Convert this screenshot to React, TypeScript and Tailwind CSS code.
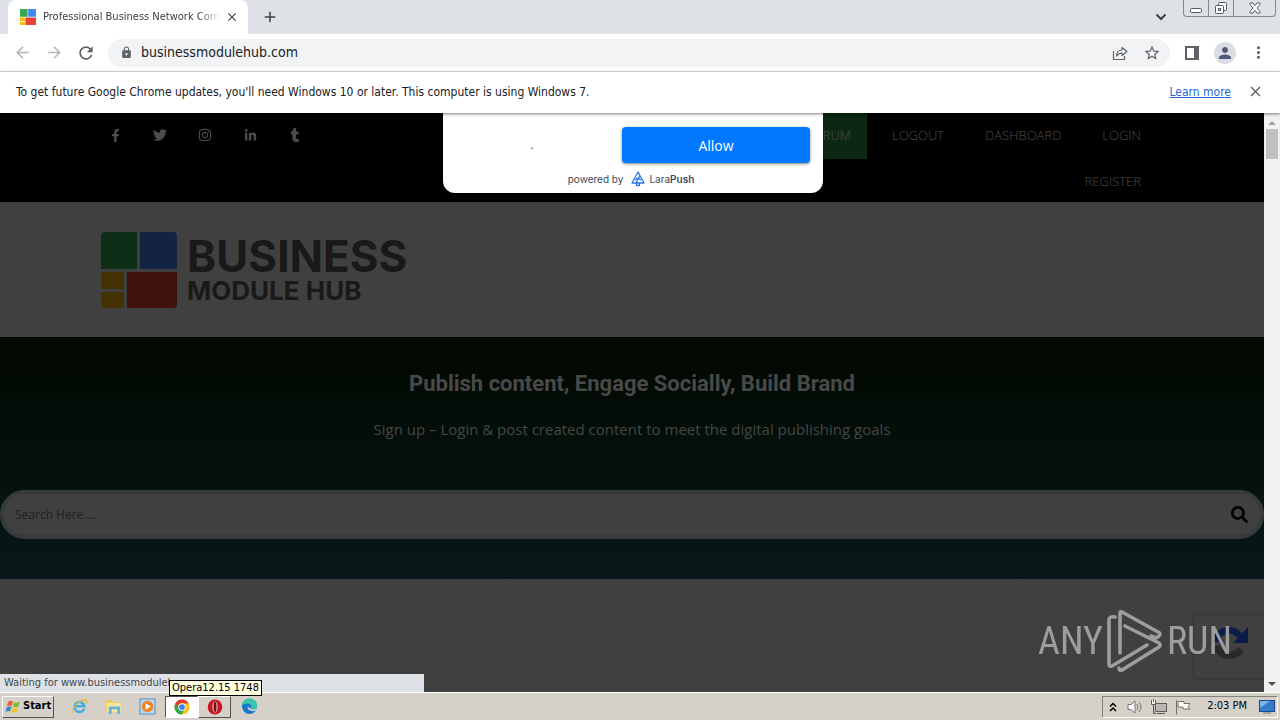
import React from "react";
import { FaFacebookF, FaTwitter, FaInstagram, FaLinkedinIn, FaTumblr, FaSearch } from "react-icons/fa";
import { MdArrowBack, MdArrowForward, MdRefresh, MdLock, MdStarBorder, MdPerson, MdMoreVert, MdClose, MdAdd } from "react-icons/md";

const uiFont = "font-['DejaVu_Sans_Condensed','Noto_Sans',sans-serif]";

function BrandMark({ className }: { className: string }) {
  return (
    <svg viewBox="0 0 76 76" className={className} aria-hidden="true">
      <path d="M4 0H36V37H0V4Q0 0 4 0Z" fill="#34a853" />
      <path d="M39 0H72Q76 0 76 4V37H39Z" fill="#4285f4" />
      <path d="M0 40H23V57H0Z" fill="#fbbc05" />
      <path d="M0 60H23V76H4Q0 76 0 72Z" fill="#fbbc05" />
      <path d="M26 40H76V72Q76 76 72 76H26Z" fill="#ea4335" />
    </svg>
  );
}

function TabStrip() {
  return (
    <div className="flex h-[34px] shrink-0 items-end bg-[#dee1e6]">
      <div className="ml-2 flex h-[34px] w-60 items-center rounded-t-lg bg-white pr-2 pl-3">
        <BrandMark className="h-4 w-4 shrink-0" />
        <span className="ml-[7px] flex-1 overflow-hidden text-[11px] whitespace-nowrap text-[#3c4043] [mask-image:linear-gradient(to_right,black_88%,transparent)]">
          Professional Business Network Comm
        </span>
        <button aria-label="Close tab" className="ml-1 flex h-4 w-4 items-center justify-center text-[#3c4043]">
          <MdClose size={14} />
        </button>
      </div>
      <button aria-label="New tab" className="ml-3 flex h-[34px] w-5 items-center justify-center text-[#3c4043]">
        <MdAdd size={18} />
      </button>
      <div className="flex-1" />
      <button aria-label="Search tabs" className="mr-3.5 flex h-[34px] w-4 items-center justify-center">
        <svg viewBox="0 0 12 8" className="h-2 w-3" fill="none" stroke="#3c4043" strokeWidth="2"><path d="M1.500 1.500L6 6L10.500 1.500" /></svg>
      </button>
      <div className="mr-1 flex h-[17px] self-start rounded-b border border-t-0 border-[#85888e]">
        <button aria-label="Minimize" className="flex w-[25px] items-center justify-center border-r border-[#85888e]">
          <svg viewBox="0 0 12 12" className="h-3 w-3" fill="white" stroke="#555960"><rect x=".5" y="6.500" width="11" height="4" rx="1" /></svg>
        </button>
        <button aria-label="Restore" className="flex w-[25px] items-center justify-center border-r border-[#85888e]">
          <svg viewBox="0 0 12 12" className="h-3 w-3" fill="white" stroke="#555960"><rect x="3.500" y=".5" width="8" height="8" rx="1" /><rect x=".5" y="3.500" width="8" height="8" rx="1" /><rect x="3.500" y="6.500" width="2" height="2" /></svg>
        </button>
        <button aria-label="Close window" className="flex w-[41px] items-center justify-center">
          <svg viewBox="0 0 12 12" className="h-3 w-3" fill="white" stroke="#555960"><path d="M1 1H4L6 3.500L8 1H11V2.500L8 6L11 9.500V11H8L6 8.500L4 11H1V9.500L4 6L1 2.500Z" /></svg>
        </button>
      </div>
    </div>
  );
}

function Toolbar() {
  return (
    <div className="flex h-[38px] shrink-0 items-center border-b border-[#dadce0] bg-white pr-3 pl-3 text-[#5f6368]">
      <button aria-label="Back" className="flex w-5 justify-center text-[#b5b7ba]"><MdArrowBack size={19} /></button>
      <button aria-label="Forward" className="ml-3 flex w-5 justify-center text-[#b5b7ba]"><MdArrowForward size={19} /></button>
      <button aria-label="Reload" className="ml-3 flex w-5 justify-center"><MdRefresh size={20} /></button>
      <div className="ml-3 flex h-7 flex-1 items-center rounded-full bg-[#f1f3f4] pr-2.5 pl-3">
        <MdLock size={13} />
        <input aria-label="Address" defaultValue="businessmodulehub.com" className="ml-2 min-w-0 flex-1 bg-transparent text-[14px] text-[#202124] outline-none" />
        <button aria-label="Share" className="flex w-4 justify-center">
          <svg viewBox="0 0 16 16" className="h-4 w-4" fill="none" stroke="currentColor" strokeWidth="1.2"><path d="M1.500 6V14.500H12.500V11" /><path d="M4.500 11C4.500 7 7 5 10 5V2.500L15 6.500L10 10.500V8C7.500 8 6 9 4.500 11Z" strokeLinejoin="round" /></svg>
        </button>
        <button aria-label="Bookmark" className="ml-4 flex w-4 justify-center"><MdStarBorder size={18} className="shrink-0" /></button>
      </div>
      <button aria-label="Side panel" className="ml-3.5 flex w-4 justify-center">
        <svg viewBox="0 0 14 14" className="h-3.5 w-3.5"><path d="M0 0H14V14H0ZM2 2V12H9V2Z" fill="currentColor" fillRule="evenodd" /></svg>
      </button>
      <button aria-label="Profile" className="ml-3.5 flex h-[22px] w-[22px] items-center justify-center rounded-full bg-[#dadde3] text-[#50597a]"><MdPerson size={18} /></button>
      <button aria-label="Menu" className="ml-3 flex w-5 justify-center"><MdMoreVert size={19} /></button>
    </div>
  );
}

function UpdateNotice() {
  return (
    <div className="z-10 flex h-[41px] shrink-0 items-center bg-white pr-4 pb-0.5 pl-4 text-[12px] text-[#202124] shadow-[0_1px_3px_rgba(0,0,0,0.5)]">
      <p className="flex-1">To get future Google Chrome updates, you'll need Windows 10 or later. This computer is using Windows 7.</p>
      <a href="#learn" className="text-[#2468d0] underline">Learn more</a>
      <button aria-label="Dismiss" className="ml-4 text-[#5f6368]"><MdClose size={17} /></button>
    </div>
  );
}

function SiteNav() {
  const item = "flex h-[46px] items-center px-4";
  return (
    <header className="flex h-[89px] shrink-0 justify-between bg-black pr-[107px] pl-[105px] text-[#4c4c4c]">
      <ul className="flex h-11 items-center gap-[25px]">
        <li><a href="#f" aria-label="Facebook" className="flex w-5 justify-center"><FaFacebookF size={13} /></a></li>
        <li><a href="#t" aria-label="Twitter" className="flex w-5 justify-center"><FaTwitter size={14} /></a></li>
        <li><a href="#i" aria-label="Instagram" className="flex w-5 justify-center"><FaInstagram size={14} /></a></li>
        <li><a href="#l" aria-label="LinkedIn" className="flex w-5 justify-center"><FaLinkedinIn size={13} /></a></li>
        <li><a href="#u" aria-label="Tumblr" className="flex w-5 justify-center"><FaTumblr size={14} /></a></li>
      </ul>
      <nav className="flex w-[400px] flex-wrap justify-end gap-x-[9px] font-['Open_Sans',sans-serif] text-[13px] font-light">
        <a href="#forum" className={item + " bg-[#0c2814]"}>FORUM</a>
        <a href="#logout" className={item}>LOGOUT</a>
        <a href="#dashboard" className={item}>DASHBOARD</a>
        <a href="#login" className={item}>LOGIN</a>
        <a href="#register" className={item}>REGISTER</a>
      </nav>
    </header>
  );
}

function PushPrompt() {
  return (
    <div className="absolute top-0 left-[443px] h-20 w-[380px] rounded-b-xl bg-white">
      <div className="flex items-center justify-between pt-3.5 pr-[13px]">
        <button className="h-9 w-[178px] font-['Open_Sans',sans-serif] text-[12px] text-[#505050]">.</button>
        <button className="h-9 w-[188px] shrink-0 rounded bg-[#0078ff] font-['Open_Sans',sans-serif] text-[14px] text-white shadow-[0_1px_3px_rgba(0,0,0,0.5)]">Allow</button>
      </div>
      <div className="mt-2 flex items-center justify-center pr-1 font-['Inter',sans-serif] text-[10px] text-[#404858]">
        <span>powered by</span>
        <svg viewBox="0 0 14 16" className="mr-1 ml-2 h-4 w-3.5" fill="none" stroke="#2878e8" strokeWidth="1.3" strokeLinejoin="round"><path d="M7 1L1 12H13L7 1M9 4.500L5 12M4 9L7 7L10 9M5.500 12V14.500H8.500V12" /></svg>
        <span>Lara<b className="font-semibold">Push</b></span>
      </div>
    </div>
  );
}

function Watermark() {
  const word = "font-['Liberation_Sans_Narrow','Roboto_Condensed','Open_Sans_Condensed','Roboto',sans-serif] text-[38px] leading-[62px]";
  return (
    <div className="absolute right-8 bottom-5 flex items-center text-[#a8a8a8] opacity-90">
      <span className={word}>ANY</span>
      <svg viewBox="0 0 56 62" className="mx-1 h-[62px] w-14" fill="none" stroke="currentColor" strokeWidth="3.600" strokeLinejoin="round" strokeLinecap="round">
        <path d="M13 43V3Q13 1 15 2L52 22.500Q54 24 52 26L49 28L44 26" />
        <path d="M8 7Q2 6 2 10V54Q2 57 5 56L40 35" />
        <path d="M18 16L52 33Q54 35 52 37L15 60Q12 61 12 58" />
      </svg>
      <span className={word}>RUN</span>
    </div>
  );
}

function WebPage() {
  return (
    <div className="relative flex min-w-0 flex-1 flex-col overflow-hidden bg-[#404040]">
      <SiteNav />
      <div className="flex h-[135px] shrink-0 items-center pl-[101px]">
        <BrandMark className="h-[76px] w-[76px] brightness-[0.27]" />
        <div className="ml-2.5 font-['Inter',sans-serif] font-bold text-[#191919]">
          <div className="text-[44px] leading-[42px]">BUSINESS</div>
          <div className="text-[26px] leading-7">MODULE HUB</div>
        </div>
      </div>
      <section className="flex h-[242px] shrink-0 flex-col items-center bg-linear-to-b from-[#020802] to-[#0a171a] pt-8">
        <h1 className="font-['Roboto',sans-serif] text-[22px] leading-[30px] font-bold text-[#494949]">Publish content, Engage Socially, Build Brand</h1>
        <p className="mt-[18px] font-['Open_Sans',sans-serif] text-[15px] leading-6 text-[#434845]">Sign up – Login &amp; post created content to meet the digital publishing goals</p>
        <form className="mt-[49px] flex h-[49px] w-full items-center rounded-full border-4 border-[#353b3b] bg-[#404040] pr-3 pl-[11px]">
          <input aria-label="Search" placeholder="Search Here...." className="min-w-0 flex-1 bg-transparent font-['Open_Sans',sans-serif] text-[12px] outline-none placeholder:text-[#1f1f1f]" />
          <button type="button" aria-label="Submit search" className="text-black"><FaSearch size={17} /></button>
        </form>
      </section>
      <PushPrompt />
      <div className="absolute right-0 bottom-3.5 h-[62px] w-[70px] rounded-l bg-[#404040] shadow-[0_0_4px_#303030]">
        <svg viewBox="0 0 40 40" className="mt-2 ml-4 h-10 w-10" fill="none" strokeWidth="7">
          <path d="M5 18A14 14 0 0 1 30 12" stroke="#0b1c48" />
          <path d="M38 3V19H23Z" fill="#0b1c48" />
          <path d="M6 22A14 14 0 0 0 31 25" stroke="#292929" />
        </svg>
      </div>
      <Watermark />
      <div className="absolute bottom-0 left-0 h-[18px] w-[424px] bg-[#dee1e6] pl-1 text-[11px] leading-[18px] whitespace-nowrap text-[#44484d]">
        Waiting for www.businessmodulehu
      </div>
    </div>
  );
}

function ScrollBar() {
  return (
    <div className="flex w-4 shrink-0 flex-col items-center bg-[#f1f1f1] pt-1.5 pb-1.5">
      <svg viewBox="0 0 8 4" className="mt-0.5 h-1 w-2"><path d="M0 4L4 0L8 4Z" fill="#a3a3a3" /></svg>
      <div className="mt-1 h-[30px] w-3 bg-[#c1c1c1]" />
      <div className="flex-1" />
      <svg viewBox="0 0 8 4" className="h-1 w-2"><path d="M0 0L4 4L8 0Z" fill="#505050" /></svg>
    </div>
  );
}

function Taskbar() {
  const raised = "border border-t-white border-l-white border-r-[#55524c] border-b-[#55524c]";
  return (
    <footer className="relative flex h-7 shrink-0 items-center border-t border-white bg-[#d5d0c8] text-[11px] text-black">
      <button className={"ml-0.5 flex h-[22px] w-[52px] items-center gap-0.5 pl-0.5 font-bold " + raised}>
        <svg viewBox="0 0 16 16" className="h-4 w-4 shrink-0">
          <path d="M3 3Q5.500 1 8 2.500L6.800 7Q4.500 6 2 7.500Z" fill="#ee6030" /><path d="M9 3Q11.500 4.500 15 2.500L13.500 7.500Q10.500 9 8 7.500Z" fill="#80bc38" />
          <path d="M1.700 8.500Q4 7 6.500 8L5 12.500Q3 11.500 .5 13Z" fill="#3b82d0" /><path d="M7.500 8.500Q10 10 13.200 8.500L12 13Q9 14.500 6.300 13Z" fill="#f7c32c" />
        </svg>
        Start
      </button>
      <button aria-label="Internet Explorer" className="ml-[17px] flex w-[17px]">
        <svg viewBox="0 0 18 18" className="h-[17px] w-[17px]" fill="none"><path d="M14 11.500A5.300 5.300 0 1 1 14.300 8.800H5.500" stroke="#42ade5" strokeWidth="2.600" /><path d="M2 16C-1 14 6 4 13 2C18 .5 17 4 16 6" stroke="#e9b93b" strokeWidth="1.300" /></svg>
      </button>
      <button aria-label="File Explorer" className="ml-[17px] flex w-[17px]">
        <svg viewBox="0 0 18 18" className="h-[17px] w-[17px]"><path d="M1 2H7L8 4H16V15H1Z" fill="#edc95d" /><path d="M2 5H17V15H2Z" fill="#f9e69b" /><path d="M4 17V9H16V17H13V12H7V17Z" fill="#69b4de" /></svg>
      </button>
      <button aria-label="Media Player" className="ml-[17px] flex w-[17px]">
        <svg viewBox="0 0 18 18" className="h-[17px] w-[17px]"><rect x="1" y="1" width="16" height="16" fill="#b8d7ee" stroke="#5590bc" /><circle cx="9" cy="9" r="6" fill="#f48120" /><path d="M7 5.500L12.500 9L7 12.500Z" fill="white" /></svg>
      </button>
      <button aria-label="Chrome" className="ml-[9px] flex h-[22px] w-[33px] items-center justify-center border border-t-[#55524c] border-r-white border-b-white border-l-[#55524c] bg-white">
        <svg viewBox="0 0 18 18" className="h-4 w-4"><circle cx="9" cy="9" r="8.500" fill="#fbc116" /><path d="M1.600 4.700A8.500 8.500 0 0 0 8.500 17.500L12 11H9Z" fill="#2da94f" /><path d="M1.600 4.700L5.500 11L9 5H16.500A8.500 8.500 0 0 0 1.600 4.700Z" fill="#e33b2e" /><circle cx="9" cy="9" r="4.200" fill="white" /><circle cx="9" cy="9" r="3.200" fill="#3d7de9" /></svg>
      </button>
      <button aria-label="Opera" className={"flex h-[22px] w-[33px] items-center justify-center " + raised}>
        <svg viewBox="0 0 16 16" className="h-4 w-4"><ellipse cx="8" cy="8" rx="7.300" ry="7.600" fill="#c9151e" /><ellipse cx="8" cy="8" rx="2.600" ry="5.800" fill="#e8d3cf" /><ellipse cx="8" cy="8" rx="1.500" ry="5.200" fill="#7f0c12" /></svg>
      </button>
      <button aria-label="Edge" className="ml-2.5 flex w-[18px]">
        <svg viewBox="0 0 18 18" className="h-[17px] w-[17px]"><circle cx="9" cy="9" r="8" fill="#1679cb" /><path d="M1 8A8 8 0 0 1 17 8.500C17 12 12 13 10.500 11C12.500 8 9 5.500 6 6C3.500 6.300 1.500 7 1 8Z" fill="#3ac4ae" /><path d="M7 9C7 14 12 15 16 13L17.500 10C15 13 11 12 10.500 11Q8.500 10 7 9Z" fill="#d5d0c8" /></svg>
      </button>
      <div className="flex-1" />
      <div className="mr-0.5 flex h-[22px] items-center border border-t-[#85827c] border-r-white border-b-white border-l-[#85827c] pr-0.5 pl-1">
        <svg viewBox="0 0 8 10" className="ml-0.5 h-2.5 w-2" fill="none" stroke="black" strokeWidth="1.500"><path d="M1 4.500L4 1.500L7 4.500M1 9L4 6L7 9" /></svg>
        <svg viewBox="0 0 16 16" className="ml-2.5 h-4 w-4" fill="white" stroke="#74716c"><path d="M1 5.500H4L8 2V14L4 10.500H1Z" /><path d="M10 5Q12 8 10 11M12 3Q16 8 12 13" fill="none" /></svg>
        <svg viewBox="0 0 16 16" className="ml-2 h-4 w-4" fill="#bbb8b2" stroke="#5e5c58"><rect x="4.500" y="4.500" width="11" height="8" /><path d="M6 14.500H14M2.500 6V14.500H5" /><path d="M.5 1V5.500H4.500V1M2.500 0V3" fill="white" /></svg>
        <svg viewBox="0 0 16 16" className="ml-2 h-4 w-4" fill="white" stroke="#74716c"><path d="M1.500 1V15.500M3 2.500H9V4.500H15L13 7.500L15 10H8V8H3Z" /></svg>
        <time className="ml-4 whitespace-nowrap">2:03 PM</time>
        <svg viewBox="0 0 16 14" className="ml-3 h-3.5 w-4"><rect x=".5" y=".5" width="15" height="11" fill="#367bc9" stroke="#194a91" /><path d="M1 1H11L1 8Z" fill="#7eb5e9" /><path d="M4 13H12" stroke="#777" /></svg>
      </div>
      <div role="tooltip" className="absolute bottom-6 left-[169px] h-4 border border-black bg-[#ffffe1] px-0.5 text-[11px] leading-[14px] whitespace-nowrap">Opera12.15 1748</div>
    </footer>
  );
}

export default function App() {
  return (
    <div className={"flex h-screen flex-col overflow-hidden " + uiFont}>
      <TabStrip />
      <Toolbar />
      <UpdateNotice />
      <main className="flex min-h-0 flex-1">
        <WebPage />
        <ScrollBar />
      </main>
      <Taskbar />
    </div>
  );
}
